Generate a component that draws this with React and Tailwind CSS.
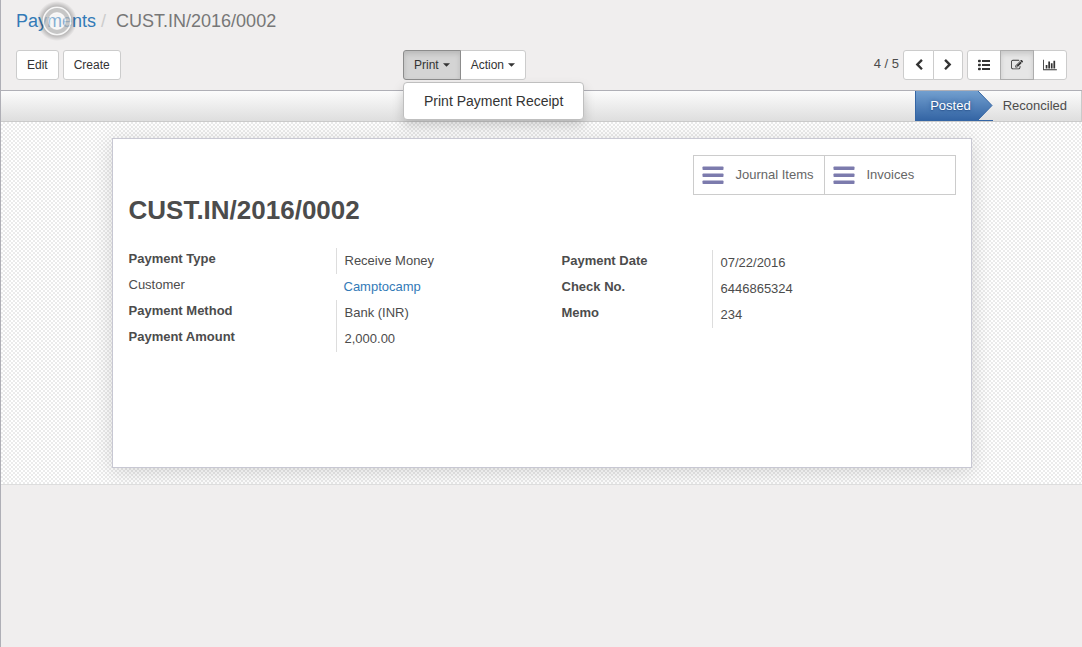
import React from "react";

const sansFont = "font-['Liberation_Sans',Arial,sans-serif]";

function Caret() {
  return (
    <svg viewBox="0 0 8 4" className="h-1 w-[7px]" fill="currentColor" aria-hidden="true">
      <path d="M0 0h8L4 4z" />
    </svg>
  );
}

function Icon({ path, wide = false }) {
  return (
    <svg
      viewBox={wide ? "0 0 2048 1792" : "0 0 1792 1792"}
      className={wide ? "h-3 w-3.5" : "h-3 w-3"}
      fill="currentColor"
      aria-hidden="true"
    >
      <path d={path} />
    </svg>
  );
}

const icons = {
  previous:
    "M1427 301l-531 531 531 531q19 19 19 45t-19 45l-166 166q-19 19-45 19t-45-19l-742-742q-19-19-19-45t19-45l742-742q19-19 45-19t45 19l166 166q19 19 19 45t-19 45z",
  next:
    "M1363 877l-742 742q-19 19-45 19t-45-19l-166-166q-19-19-19-45t19-45l531-531-531-531q-19-19-19-45t19-45l166-166q19-19 45-19t45 19l742 742q19 19 19 45t-19 45z",
  form:
    "M888 1184l116-116-152-152-116 116v56h96v96h56zm440-720q-16-16-33 1l-350 350q-17 17-1 33t33-1l350-350q17-17 1-33zm80 594v190q0 119-84.5 203.5t-203.5 84.5h-832q-119 0-203.5-84.5t-84.5-203.5v-832q0-119 84.5-203.5t203.5-84.5h832q63 0 117 25 15 7 18 23 3 17-9 29l-49 49q-14 14-32 8-23-6-45-6h-832q-66 0-113 47t-47 113v832q0 66 47 113t113 47h832q66 0 113-47t47-113v-126q0-13 9-22l64-64q15-15 35-7t20 29zm-96-738l288 288-672 672h-288v-288zm444 132l-92 92-288-288 92-92q28-28 68-28t68 28l152 152q28 28 28 68t-28 68z",
  graph:
    "M640 896v512h-256v-512h256zm384-512v1024h-256v-1024h256zm1024 1152v128h-2048v-1536h128v1408h1920zm-640-896v768h-256v-768h256zm384-384v1152h-256v-1152h256z",
};

function ListIcon() {
  return (
    <svg viewBox="0 0 12 12" className="h-3 w-3" fill="currentColor" aria-hidden="true">
      <path d="M4 1h8v2H4zM4 5h8v2H4zM4 9h8v2H4z" />
      <rect x="0" y="0.8" width="2.8" height="2.4" rx="0.8" />
      <rect x="0" y="4.8" width="2.8" height="2.4" rx="0.8" />
      <rect x="0" y="8.8" width="2.8" height="2.4" rx="0.8" />
    </svg>
  );
}

function Spinner() {
  return (
    <svg
      viewBox="0 0 40 40"
      className="pointer-events-none absolute top-px left-[21px] h-10 w-10"
      aria-hidden="true"
    >
      <defs>
        <radialGradient id="halo">
          <stop offset="0.65" stopColor="#000" stopOpacity="0.3" />
          <stop offset="1" stopColor="#000" stopOpacity="0" />
        </radialGradient>
      </defs>
      <path
        d="M20 0a20 20 0 1 0 0 40a20 20 0 1 0 0-40zM20 6a14 14 0 1 1 0 28a14 14 0 1 1 0-28z"
        fill="url(#halo)"
      />
      <circle cx="20" cy="20" r="8" fill="#fff" fillOpacity="0.4" />
      <circle cx="20" cy="20" r="11" fill="none" stroke="#b8b8b8" strokeOpacity="0.75" strokeWidth="5" />
      <circle cx="20" cy="20" r="13.7" fill="none" stroke="#fff" strokeOpacity="0.8" strokeWidth="1.6" />
      <circle cx="20" cy="20" r="8.3" fill="none" stroke="#fff" strokeOpacity="0.6" strokeWidth="1.4" />
    </svg>
  );
}

function Breadcrumb() {
  return (
    <nav aria-label="Breadcrumb" className="relative flex h-[42px] items-center text-lg">
      <a href="#payments" className="text-[#337ab7]">Payments</a>
      <span className="px-[5px] text-[#cccccc]">/</span>
      <span className="pl-[5px] text-[#777777]">CUST.IN/2016/0002</span>
      <Spinner />
    </nav>
  );
}

function Toolbar() {
  const plain =
    "flex h-[30px] items-center rounded-[3px] border border-[#cccccc] bg-white px-2.5 text-xs text-[#333333]";
  const view = "flex h-[30px] items-center border px-2.5";
  return (
    <div className="grid grid-cols-[387fr_664fr] pt-2 text-xs text-[#333333]">
      <div className="flex gap-1">
        <button className={plain}>Edit</button>
        <button className={plain}>Create</button>
      </div>
      <div className="flex justify-between">
        <div className="relative flex">
          <button
            aria-expanded="true"
            className="z-10 flex h-[30px] items-center gap-1 rounded-l-[3px] border border-[#8c8c8c] bg-[#d4d4d4] px-2.5 shadow-[inset_0_3px_5px_rgba(0,0,0,0.125)]"
          >
            Print
            <Caret />
          </button>
          <button className="-ml-px flex h-[30px] items-center gap-1 rounded-r-[3px] border border-[#cccccc] bg-white px-2.5">
            Action
            <Caret />
          </button>
          <ul className="absolute top-8 left-0 z-20 rounded border border-[#bfbfbf] bg-white py-2 text-sm leading-5 whitespace-nowrap shadow-[0_6px_12px_rgba(0,0,0,0.175)]">
            <li>
              <a href="#receipt" className="block px-5 text-[#333333]">Print Payment Receipt</a>
            </li>
          </ul>
        </div>
        <div className="flex gap-1">
          <span className="self-center pb-0.5 text-[13px] text-[#4c4c4c]">4 / 5</span>
          <div className="flex">
            <button aria-label="Previous" className="flex h-[30px] w-[31px] items-center justify-center rounded-l-[3px] border border-[#cccccc] bg-white">
              <Icon path={icons.previous} />
            </button>
            <button aria-label="Next" className="-ml-px flex h-[30px] w-[30px] items-center justify-center rounded-r-[3px] border border-[#cccccc] bg-white">
              <Icon path={icons.next} />
            </button>
          </div>
          <div className="flex">
            <button aria-label="List view" className={view + " rounded-l-[3px] border-[#cccccc] bg-white"}>
              <ListIcon />
            </button>
            <button
              aria-label="Form view"
              aria-pressed="true"
              className={view + " z-10 -ml-px border-[#adadad] bg-[#e6e6e6] shadow-[inset_0_3px_5px_rgba(0,0,0,0.125)]"}
            >
              <Icon path={icons.form} />
            </button>
            <button aria-label="Graph view" className="-ml-px flex h-[30px] w-[34px] items-center justify-center rounded-r-[3px] border border-[#cccccc] bg-white">
              <Icon path={icons.graph} wide />
            </button>
          </div>
        </div>
      </div>
    </div>
  );
}

function StatusBar() {
  return (
    <div className="flex h-8 justify-end border-y border-t-[#afafb6] border-b-[#cacaca] bg-linear-to-b from-[#fcfcfc] to-[#dedede] text-[13px] text-[#4c4c4c]">
      <ol className="flex border-r border-[#cacaca]">
        <li
          aria-current="step"
          className="flex border-b border-[#3465a4] text-white [text-shadow:0_1px_1px_#2f5a94,0_0_4px_#2f5a94]"
        >
          <span className="flex items-center border-l border-[#3465a4] bg-linear-to-b from-[#729fcf] to-[#3465a4] pr-[7px] pl-3.5">
            Posted
          </span>
          <svg viewBox="0 0 15 29" preserveAspectRatio="none" className="h-full w-[15px]" aria-hidden="true">
            <defs>
              <linearGradient id="arrow" x1="0" y1="0" x2="0" y2="1">
                <stop offset="0" stopColor="#729fcf" />
                <stop offset="1" stopColor="#3465a4" />
              </linearGradient>
            </defs>
            <path d="M0 0L14 14.5L0 29z" fill="url(#arrow)" />
            <path d="M0 0L14 14.5L0 29" fill="none" stroke="#3465a4" />
          </svg>
        </li>
        <li className="flex items-center pr-3.5 pl-2.5">Reconciled</li>
      </ol>
    </div>
  );
}

function StatButton({ children }) {
  return (
    <button className="-mr-px flex h-10 w-[132px] items-center gap-3 border border-[#cccccc] pl-2 text-[13px] whitespace-nowrap text-[#666666]">
      <svg viewBox="0 0 22 18" className="h-[18px] w-[22px] shrink-0 text-[#7c7bad]" fill="currentColor" aria-hidden="true">
        <rect x="0.5" y="0.5" width="21" height="3.5" rx="0.8" />
        <rect x="0.5" y="7.5" width="21" height="3.5" rx="0.8" />
        <rect x="0.5" y="14.5" width="21" height="3.5" rx="0.8" />
      </svg>
      <span>{children}</span>
    </button>
  );
}

function Field({ label, optional = false, children }) {
  return (
    <>
      <dt className={optional ? "leading-[22px]" : "leading-[22px] font-bold"}>{label}</dt>
      <dd className={optional ? "pl-2 leading-[26px]" : "border-l border-[#dddddd] pl-2 leading-[26px]"}>
        {children}
      </dd>
    </>
  );
}

function Sheet() {
  return (
    <main className="overflow-hidden border-b border-[#dddddd] bg-[repeating-conic-gradient(#ebebeb_0_25%,#ffffff_0_50%)] bg-size-[4px_4px] py-4">
      <article className="mx-auto min-h-[330px] w-full max-w-[860px] border border-[#c8c8d3] bg-white p-4 text-[13px] text-[#4c4c4c] shadow-[0_4px_20px_rgba(0,0,0,0.15)]">
        <div className="flex justify-end">
          <StatButton>Journal Items</StatButton>
          <StatButton>Invoices</StatButton>
        </div>
        <h1 className="text-[26px] leading-[30px] font-bold">CUST.IN/2016/0002</h1>
        <div className="grid grid-cols-2 gap-10 pt-[23px]">
          <dl className="grid auto-rows-[26px] grid-cols-[207px_1fr]">
            <Field label="Payment Type">Receive Money</Field>
            <Field label="Customer" optional>
              <a href="#customer" className="text-[#337ab7]">Camptocamp</a>
            </Field>
            <Field label="Payment Method">Bank (INR)</Field>
            <Field label="Payment Amount">2,000.00</Field>
          </dl>
          <dl className="grid auto-rows-[26px] grid-cols-[150px_1fr] pt-0.5">
            <Field label="Payment Date">07/22/2016</Field>
            <Field label="Check No.">6446865324</Field>
            <Field label="Memo">234</Field>
          </dl>
        </div>
      </article>
    </main>
  );
}

export default function App() {
  return (
    <div className={"min-h-screen border-l border-[#afafb6] bg-[#f0eeee] " + sansFont}>
      <header className="px-[15px] pb-2.5">
        <Breadcrumb />
        <Toolbar />
      </header>
      <StatusBar />
      <Sheet />
    </div>
  );
}
